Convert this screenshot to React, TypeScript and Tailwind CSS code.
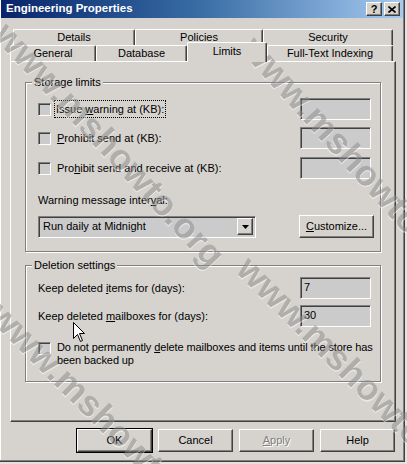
import React from 'react';

const raised =
  'border border-t-white border-l-white border-r-[#404040] border-b-[#404040] shadow-[inset_-1px_-1px_#808080]';
const sunken =
  'border border-t-[#808080] border-l-[#808080] border-r-white border-b-white shadow-[inset_1px_1px_#404040]';
const etched = 'border border-[#808080] shadow-[inset_1px_1px_#fff,1px_1px_#fff]';

function Edit({ value, className = '' }: { value?: string; className?: string }) {
  return (
    <div className={`w-[71px] h-[22px] bg-[#cbcbcb] ${sunken} pl-[3px] pt-[2px] leading-[14px] ${className}`}>
      {value}
    </div>
  );
}

function Check() {
  return <div className={`w-[13px] h-[13px] shrink-0 bg-[#cbcbcb] ${sunken}`} />;
}

function Tab({ label, w, selected = false }: { label: string; w: string; selected?: boolean }) {
  return (
    <div
      className={`${w} ${
        selected ? 'relative z-10 h-[20px] -mb-[1px] pb-[3px] bg-[#d6d3ce]' : 'h-[16px]'
      } flex items-center justify-center border-t border-l border-t-white border-l-white border-r border-r-[#404040] shadow-[inset_-1px_0_#808080] rounded-t-[2px]`}
    >
      {label}
    </div>
  );
}

function Button({ children, className = '' }: { children: React.ReactNode; className?: string }) {
  return (
    <div className={`w-[75px] h-[23px] flex items-center justify-center ${raised} ${className}`}>{children}</div>
  );
}

function GroupLabel({ children }: { children: React.ReactNode }) {
  return <div className="-mt-[7px] ml-[6px] px-[2px] w-fit h-[13px] leading-[13px] bg-[#d6d3ce]">{children}</div>;
}

export default function App() {
  return (
    <div className="relative w-[407px] h-[464px] overflow-hidden bg-[#e4e2de] text-[11px] text-black font-['Liberation_Sans',Arial,sans-serif]">
      <div className="w-[405px] h-[462px] bg-[#d6d3ce] border-r border-b border-r-[#404040] border-b-[#404040] shadow-[inset_-1px_-1px_#808080,inset_1px_0_#fff] flex flex-col">
        {/* title bar */}
        <div className="mx-[1px] h-[18px] flex items-center bg-gradient-to-r from-[#0a246a] via-[#3a6ea5] to-[#a6caf0] pl-[5px] pr-[3px]">
          <span className="text-white font-bold text-[11.5px]">Engineering Properties</span>
          <div className="ml-auto flex gap-[2px]">
            <div className={`w-[16px] h-[14px] bg-[#d6d3ce] ${raised} flex items-center justify-center font-bold text-[11px] leading-none`}>
              ?
            </div>
            <div className={`w-[16px] h-[14px] bg-[#d6d3ce] ${raised} flex items-center justify-center`}>
              <svg width="8" height="7" viewBox="0 0 8 7">
                <path d="M0.5 0.5 L7.5 6.5 M7.5 0.5 L0.5 6.5" stroke="#000" strokeWidth="1.6" />
              </svg>
            </div>
          </div>
        </div>

        {/* tabs back row */}
        <div className="mt-[10px] ml-[13px] flex h-[17px] items-end">
          <Tab label="Details" w="w-[122px]" />
          <Tab label="Policies" w="w-[128px]" />
          <Tab label="Security" w="w-[130px]" />
        </div>
        {/* tabs front row */}
        <div className="ml-[10px] flex h-[16px] items-end">
          <Tab label="General" w="w-[86px]" />
          <Tab label="Database" w="w-[91px]" />
          <Tab label="Limits" w="w-[80px]" selected />
          <Tab label="Full-Text Indexing" w="w-[126px]" />
        </div>

        {/* panel */}
        <div className={`ml-[10px] w-[386px] h-[361px] ${raised} flex flex-col`}>
          <div className={`mt-[20px] ml-[14px] w-[356px] h-[170px] ${etched} flex flex-col`}>
            <GroupLabel>Storage limits</GroupLabel>
            <div className="mt-[9px] flex items-center pl-[12px] pr-[9px]">
              <Check />
              <span className="ml-[4px] px-[1px] outline outline-1 outline-dotted outline-black">
                Issue <u>w</u>arning at (KB):
              </span>
              <Edit className="ml-auto" />
            </div>
            <div className="mt-[7px] flex items-center pl-[12px] pr-[9px]">
              <Check />
              <span className="ml-[6px]">
                <u>P</u>rohibit send at (KB):
              </span>
              <Edit className="ml-auto" />
            </div>
            <div className="mt-[8px] flex items-center pl-[12px] pr-[9px]">
              <Check />
              <span className="ml-[6px]">
                Pro<u>h</u>ibit send and receive at (KB):
              </span>
              <Edit className="ml-auto" />
            </div>
            <div className="mt-[15px] ml-[12px] h-[13px] leading-[13px]">
              Warning message inter<u>v</u>al:
            </div>
            <div className="mt-[8px] flex items-center pl-[12px] pr-[6px]">
              <div className={`w-[218px] h-[22px] bg-[#cbcbcb] ${sunken} flex items-center pl-[4px] pr-[2px]`}>
                <span>Run daily at Midnight</span>
                <div className={`ml-auto w-[16px] h-[17px] bg-[#d6d3ce] ${raised} flex items-center justify-center`}>
                  <svg width="7" height="4" viewBox="0 0 7 4">
                    <path d="M0 0 H7 L3.5 4 Z" fill="#000" />
                  </svg>
                </div>
              </div>
              <Button className="ml-auto">
                <span>
                  <u>C</u>ustomize...
                </span>
              </Button>
            </div>
          </div>

          <div className={`mt-[13px] ml-[14px] w-[356px] h-[117px] ${etched} flex flex-col`}>
            <GroupLabel>Deletion settings</GroupLabel>
            <div className="mt-[5px] flex items-center pl-[12px] pr-[9px]">
              <span>
                Keep deleted <u>i</u>tems for (days):
              </span>
              <Edit value="7" className="ml-auto" />
            </div>
            <div className="mt-[6px] flex items-center pl-[12px] pr-[9px]">
              <span>
                Keep deleted <u>m</u>ailboxes for (days):
              </span>
              <Edit value="30" className="ml-auto" />
            </div>
            <div className="mt-[14px] flex items-start pl-[12px] pr-[2px]">
              <div className="mt-[1px]">
                <Check />
              </div>
              <span className="ml-[6px] leading-[13px] whitespace-nowrap tracking-[-0.1px]">
                Do not permanently <u>d</u>elete mailboxes and items until the store has
                <br />
                been backed up
              </span>
            </div>
          </div>
        </div>

        {/* buttons */}
        <div className="mt-[7px] ml-[77px] flex gap-[6px]">
          <Button className="outline outline-1 outline-black">OK</Button>
          <Button>Cancel</Button>
          <Button>
            <span className="text-[#808080] [text-shadow:1px_1px_0_#fff]">
              <u>A</u>pply
            </span>
          </Button>
          <Button>Help</Button>
        </div>
      </div>

      {/* mouse pointer */}
      <svg className="absolute left-[73px] top-[322px]" width="13" height="21" viewBox="0 0 13 21">
        <path d="M0.5 0.5 V16.5 L4.5 12.5 L7.5 19.5 L9.5 18.5 L6.5 11.5 H11.5 Z" fill="#fff" stroke="#000" strokeWidth="1" />
      </svg>

      {/* watermark */}
      <div className="pointer-events-none absolute inset-0 overflow-hidden font-bold text-[36px] leading-none text-[#8a8a8a] opacity-50 [text-shadow:1px_1px_0_#fff]">
        <span className="absolute left-[14px] top-[16px] origin-top-left rotate-[47deg] whitespace-nowrap">www.mshowto.org</span>
        <span className="absolute left-[262px] top-[30px] origin-top-left rotate-[48deg] whitespace-nowrap">www.mshowto.org</span>
        <span className="absolute left-[8px] top-[296px] origin-top-left rotate-[45deg] whitespace-nowrap">www.mshowto.org</span>
        <span className="absolute left-[256px] top-[250px] origin-top-left rotate-[45deg] whitespace-nowrap">www.mshowto.org</span>
      </div>
    </div>
  );
}
